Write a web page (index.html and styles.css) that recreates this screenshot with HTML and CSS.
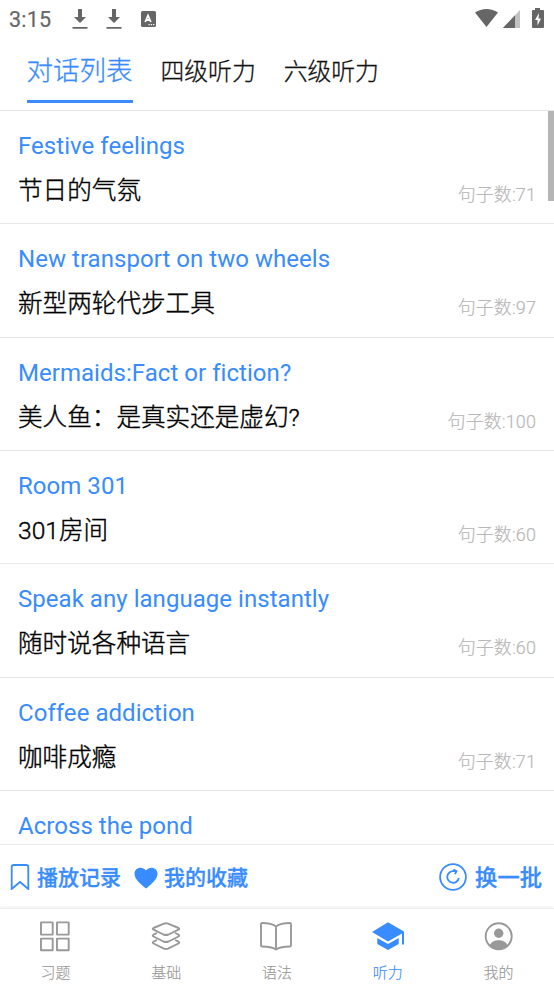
FILE: index.html
```html
<!DOCTYPE html>
<html lang="zh-CN">
<head>
<meta charset="utf-8">
<title>听力</title>
<link rel="stylesheet" href="styles.css">
</head>
<body>
<div class="app">
  <header class="status">
    <span class="clock">3:15</span>
    <svg class="download" width="16" height="22" viewBox="0 0 16 22"><path d="M6 1h4v8h4l-6 6-6-6h4zM.5 19h15v1.8H.5z"/></svg>
    <svg class="download second" width="16" height="22" viewBox="0 0 16 22"><path d="M6 1h4v8h4l-6 6-6-6h4zM.5 19h15v1.8H.5z"/></svg>
    <svg class="input-icon" width="15" height="16" viewBox="0 0 15 16"><rect width="15" height="16" rx="1.500"/><path d="M4.200 11 7 4.500 9.800 11M5 9h4" fill="none" stroke="#fff" stroke-width="1.800"/><path d="M7.500 13h1.300v1.300H7.500zM9.800 13h1.300v1.300H9.800zM12.100 13h1.300v1.300h-1.300z" fill="#fff"/></svg>
    <svg class="system" width="80" height="22" viewBox="0 0 80 22"><path d="M1 4.500C8-.2 17-.2 24 4.500L12.500 19z"/><path d="M46 2v18H29z" fill="#c1c1c1"/><path d="M41 7.300V20H29z"/><path fill-rule="evenodd" d="M61 0h5v2h3q1 0 1 1v16q0 1-1 1H59q-1 0-1-1V3q0-1 1-1h2zM65 5l-4 7h2.500v5.500l3.500-7h-2.500z"/></svg>
  </header>
  <nav class="tabs">
    <a class="tab active">对话列表</a>
    <a class="tab">四级听力</a>
    <a class="tab">六级听力</a>
  </nav>
  <main class="list">
    <article class="row"><h2>Festive feelings</h2><div class="sub"><p>节日的气氛</p><small>句子数:71</small></div></article>
    <article class="row"><h2>New transport on two wheels</h2><div class="sub"><p>新型两轮代步工具</p><small>句子数:97</small></div></article>
    <article class="row"><h2>Mermaids:Fact or fiction?</h2><div class="sub"><p>美人鱼：是真实还是虚幻?</p><small>句子数:100</small></div></article>
    <article class="row"><h2>Room 301</h2><div class="sub"><p>301房间</p><small>句子数:60</small></div></article>
    <article class="row"><h2>Speak any language instantly</h2><div class="sub"><p>随时说各种语言</p><small>句子数:60</small></div></article>
    <article class="row"><h2>Coffee addiction</h2><div class="sub"><p>咖啡成瘾</p><small>句子数:71</small></div></article>
    <article class="row"><h2>Across the pond</h2></article>
    <i class="scrollbar"></i>
  </main>
  <section class="actions">
    <svg class="bookmark" width="20" height="27" viewBox="0 0 20 27"><path d="M1.700 26V4q0-2 2-2h12.600q2 0 2 2V26L10 19z"/></svg>
    <b>播放记录</b>
    <svg class="heart" width="24" height="22" viewBox="0 0 24 22"><path d="M12 21.500C7 17.500.5 12.500.5 6.800.5.800 8-1.500 12 3.500 16-1.500 23.500.8 23.500 6.800 23.500 12.500 17 17.500 12 21.500z"/></svg>
    <b>我的收藏</b>
    <svg class="refresh" width="28" height="28" viewBox="0 0 28 28"><circle cx="14" cy="14" r="12.900"/><path d="M19.800 15a5.800 5.800 0 1 1-5.300-6.800h2.800M14.500 6.500l3 1.700-1.500 3"/></svg>
    <b class="batch">换一批</b>
  </section>
  <footer class="bottom">
    <a class="item"><svg viewBox="0 0 34 34"><path d="M3 3.400h11.700v12.200H3zM19 3.400h11.700v12.200H19zM3 19.600h11.700v11.700H3zM19 19.600h11.700v11.700H19z"/></svg><span>习题</span></a>
    <a class="item"><svg viewBox="0 0 34 34"><path d="M15 4.600q2-.8 4 0L29.500 9q1.500.8 0 1.700L19.500 15.500q-2.500 1-5 0L4.500 10.700q-1.500-.9 0-1.700zM8 14l-3.500 1.700q-1.500.9 0 1.800L14.500 22.500q2.500 1 5 0L29.500 17.500q1.500-.9 0-1.800L26 14M8 21l-3.500 1.700q-1.500.9 0 1.800L15 29.600q2 .8 4 0L29.500 24.500q1.500-.9 0-1.800L26 21"/></svg><span>基础</span></a>
    <a class="item"><svg viewBox="0 0 34 34"><path d="M16 7.500C12 4.500 8 4 2.200 4q-1.200 0-1.200 1.200V26.500q0 1 1.200 1C8 27.500 12 28 16 30.500c4-2.500 8-3 13.800-3q1.200 0 1.200-1V5.200Q31 4 29.800 4C24 4 20 4.500 16 7.500zV30"/></svg><span>语法</span></a>
    <a class="item current"><svg viewBox="0 0 34 34"><path d="M17 3.300 33 12.500v13h-2V14.500L17 22.500 1 13zM6.300 19l10.700 6 10.700-6v6L17 31l-10.700-6z"/></svg><span>听力</span></a>
    <a class="item"><svg viewBox="0 0 34 34"><circle cx="16.700" cy="17.300" r="13"/><circle class="solid" cx="16.700" cy="14.300" r="4.700"/><path class="solid" d="M7.700 26.300c2-4 5.500-5 9-5s7 1 9 5q-9 7.500-18 0z"/></svg><span>我的</span></a>
  </footer>
</div>
</body>
</html>
```
FILE: styles.css
```css
* { box-sizing: border-box; }
body { margin: 0; background: #fff; font-family: Roboto, "Noto Sans CJK SC", sans-serif; }
.app { width: 554px; height: 984px; display: flex; flex-direction: column; overflow: hidden; }
.status { height: 38px; flex: none; display: flex; align-items: center; padding-left: 9px; color: #666; fill: #666; }
.clock { font-size: 21.500px; width: 63px; letter-spacing: .2px; -webkit-text-stroke: .2px #666; }
.second { margin-left: 18px; }
.input-icon { margin-left: 19px; }
.system { margin-left: auto; }
.tabs { height: 73px; flex: none; display: flex; align-items: flex-start; gap: 28px; padding-left: 26.500px; border-bottom: 1px solid #e7e7e7; }
.tab { height: 65px; line-height: 68px; font-size: 23.800px; font-weight: 300; color: #111; -webkit-text-stroke: .3px; }
.tab.active { line-height: 66px; font-size: 26.500px; color: #388cff; border-bottom: 3px solid #388cff; }
.list { height: 733px; flex: none; position: relative; overflow: hidden; }
.row { height: 113.350px; padding: 18px 18px 0; border-bottom: 1px solid #e7e7e7; }
h2 { margin: 0; font-weight: 400; font-size: 24px; line-height: 34px; color: #388cff; letter-spacing: .04px; }
.sub { display: flex; justify-content: space-between; height: 54px; }
p { margin: 0; color: #000; font-weight: 300; font-size: 24.600px; line-height: 56px; -webkit-text-stroke: .4px; }
small { color: #b8b8b8; font-weight: 300; font-size: 18px; line-height: 64px; letter-spacing: .1px; -webkit-text-stroke: .2px; }
.scrollbar { position: absolute; top: 0; right: 0; width: 6px; height: 90px; background: #b5b5b5; }
.actions { height: 64px; flex: none; display: flex; align-items: center; padding: 0 12px 0 10px; border-top: 1px solid #e7e7e7; color: #388cff; font-size: 21px; }
.actions svg { flex: none; }
.actions b { font-weight: 500; margin-top: -2px; -webkit-text-stroke: .3px; }
.bookmark { margin-right: 7px; fill: none; stroke: #388cff; stroke-width: 1.800; }
.heart { margin: 2px 6px 0 13px; fill: #388cff; }
.refresh { margin: 0 8px 0 auto; fill: none; stroke: #388cff; stroke-width: 1.800; }
.actions .batch { font-size: 22.300px; }
.bottom { height: 76px; flex: none; display: flex; border-top: 1px solid #eee; box-shadow: 0 -1px 3px #0001; }
.item { flex: 1; display: flex; flex-direction: column; align-items: center; padding-top: 10px; color: #999; font-size: 15px; font-weight: 300; }
.item svg { flex: none; width: 34px; height: 34px; fill: none; stroke: #999; stroke-width: 1.900; stroke-linejoin: round; }
.item span { line-height: 22px; margin-top: 9px; -webkit-text-stroke: .15px; }
.item.current { color: #388cff; }
.item.current svg { fill: #388cff; stroke: none; }
.item .solid { fill: #999; stroke: none; }
```
